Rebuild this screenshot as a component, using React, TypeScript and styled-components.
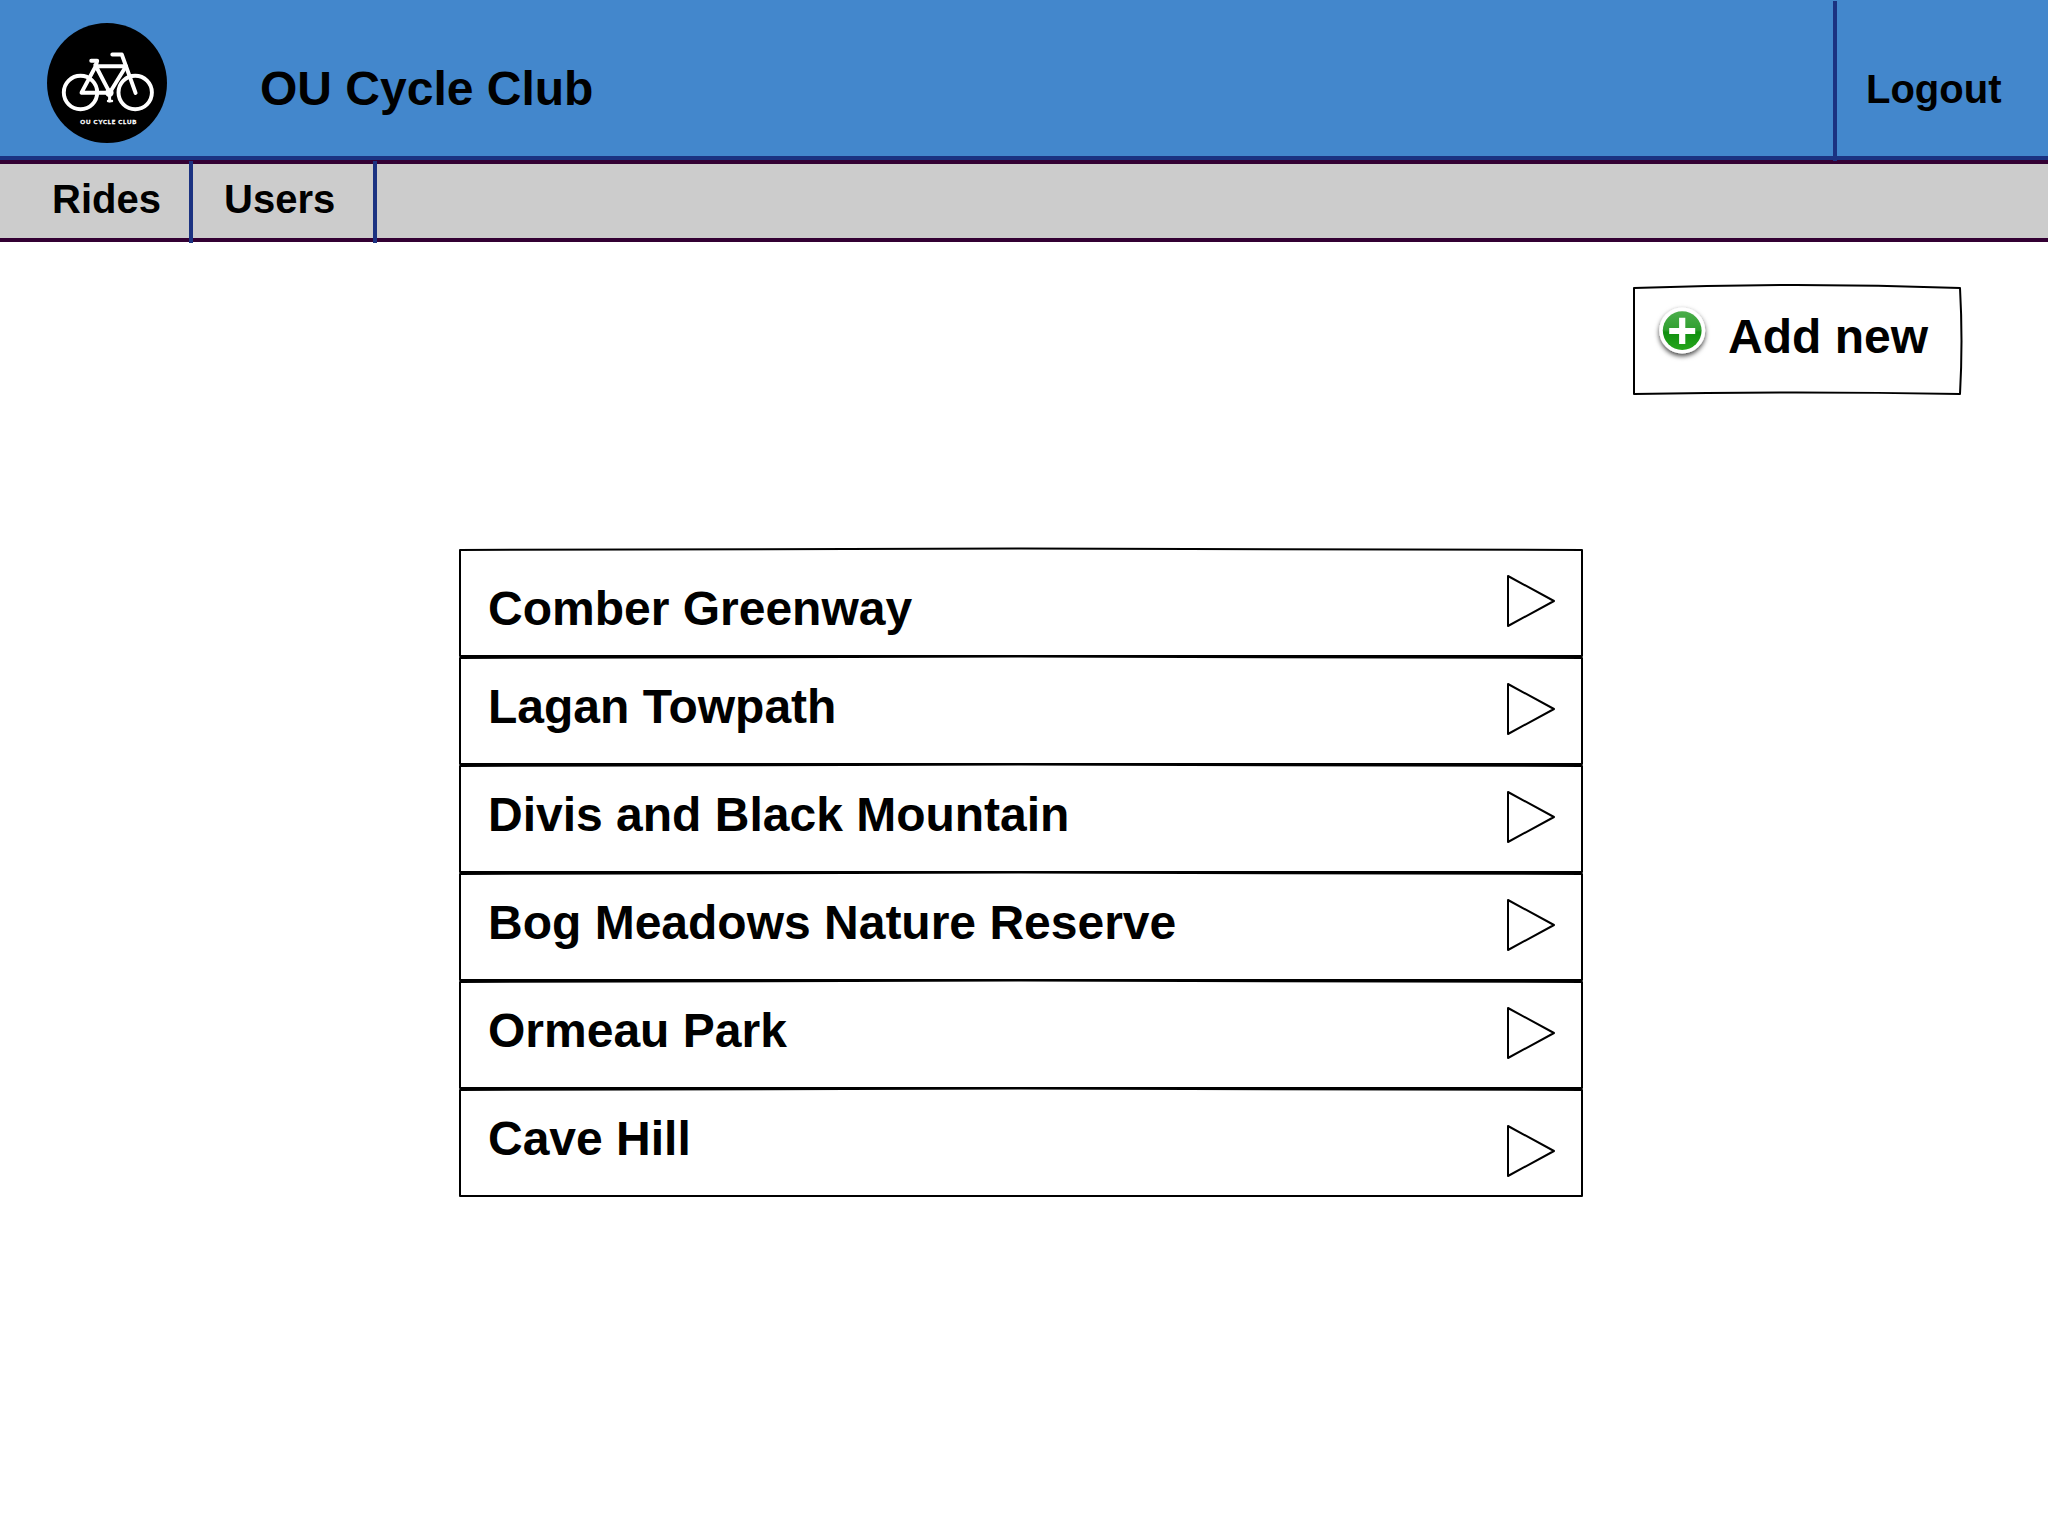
import React from "react";
import styled, { createGlobalStyle } from "styled-components";

const NAVY = "#1b3281";
const PLUM = "#330033";

const GlobalStyle = createGlobalStyle`
  * { box-sizing: border-box; }
  body {
    margin: 0;
    background: #fff;
    color: #000;
    font-family: "Liberation Sans", Arial, sans-serif;
    font-weight: 700;
  }
  button, a { font: inherit; color: inherit; text-decoration: none; }
`;

const Page = styled.div`
  display: flex;
  flex-direction: column;
  width: 2048px;
  height: 1536px;
  overflow: hidden;
`;

const Header = styled.header`
  display: flex;
  align-items: flex-start;
  height: 160px;
  background: #4387cc;
  border-bottom: 4px solid ${NAVY};
`;

const LogoWrap = styled.div`
  width: 120px;
  height: 120px;
  margin: 23px 0 0 47px;
  svg { display: block; }
`;

const Title = styled.h1`
  margin: 61px 0 0 93px;
  font-size: 48px;
  line-height: 56px;
  white-space: nowrap;
`;

const Logout = styled.a`
  position: relative;
  height: 160px;
  width: 215px;
  margin: 1px 0 0 auto;
  padding: 64px 0 0 29px;
  border-left: 4px solid ${NAVY};
  font-size: 40px;
  line-height: 48px;
`;

const Nav = styled.nav`
  display: flex;
  align-items: flex-start;
  height: 82px;
  background: #ccc;
  border-top: 4px solid ${PLUM};
  border-bottom: 4px solid ${PLUM};
`;

const Tab = styled.a<{ $width: number; $inset: number }>`
  width: ${(p) => p.$width}px;
  height: 82px;
  margin-top: -3px;
  padding: 14px 0 0 ${(p) => p.$inset}px;
  border-right: 4px solid ${NAVY};
  font-size: 40px;
  line-height: 48px;
`;

const Toolbar = styled.div`
  display: flex;
  justify-content: flex-end;
  padding: 41px 84px 0 0;
`;

const AddButton = styled.button`
  display: grid;
  width: 332px;
  height: 114px;
  padding: 0;
  border: 0;
  background: none;
  text-align: left;
  > * { grid-area: 1 / 1; }
`;

const AddContent = styled.span`
  display: flex;
  align-items: flex-start;
`;

const PlusWrap = styled.span`
  width: 60px;
  height: 60px;
  margin: 19px 0 0 20px;
  svg { display: block; }
`;

const AddLabel = styled.span`
  margin: 26px 0 0 16px;
  font-size: 48px;
  line-height: 56px;
  white-space: nowrap;
`;

const List = styled.ul`
  width: 1124px;
  margin: 152px 0 0 459px;
  padding: 0;
  list-style: none;
`;

const Row = styled.li`
  display: grid;
  height: 108px;
  > * { grid-area: 1 / 1; }
`;

const Outline = styled.svg`
  display: block;
  overflow: visible;
  fill: none;
  stroke: #000;
  stroke-width: 2;
  stroke-linejoin: round;
`;

const RowContent = styled.div`
  display: flex;
  justify-content: space-between;
  align-items: flex-start;
  padding: 0 27px 0 29px;
`;

const RowLabel = styled.span<{ $top: number }>`
  margin-top: ${(p) => p.$top}px;
  font-size: 48px;
  line-height: 56px;
  white-space: nowrap;
`;

const Arrow = styled.svg<{ $top: number }>`
  margin-top: ${(p) => p.$top}px;
  fill: none;
  stroke: #000;
  stroke-width: 2;
  stroke-linejoin: round;
`;

const RIDES = [
  { name: "Comber Greenway", text: 32, arrow: 25 },
  { name: "Lagan Towpath", text: 22, arrow: 25 },
  { name: "Divis and Black Mountain", text: 22, arrow: 25 },
  { name: "Bog Meadows Nature Reserve", text: 22, arrow: 25 },
  { name: "Ormeau Park", text: 22, arrow: 25 },
  { name: "Cave Hill", text: 22, arrow: 35 },
];

const Logo = () => (
  <svg width="120" height="120" viewBox="0 0 120 120">
    <circle cx="60" cy="60" r="60" />
    <g fill="none" stroke="#fff" strokeWidth="3.9" strokeLinecap="round" strokeLinejoin="round">
      <circle cx="33.5" cy="69.5" r="16.7" />
      <circle cx="88.2" cy="69.5" r="16.7" />
      <path d="M65.3 31.5H74.8L88.6 70" />
      <path d="M44.2 37.7H50.2L48.8 43L34.5 69.7H62" />
      <path d="M49 43.2H79L62.7 69.7L48.3 42" />
      <path d="M62.6 70V78" strokeWidth="3" />
      <path d="M61 78H65" strokeWidth="2.4" />
    </g>
    <circle cx="62.4" cy="69.7" r="4.2" fill="#fff" />
    <text x="61.3" y="101" fill="#fff" stroke="#fff" strokeWidth="0.3" fontSize="6" fontWeight="900" textAnchor="middle" textLength="56" fontFamily="Lato, sans-serif">
      OU CYCLE CLUB
    </text>
  </svg>
);

const Plus = () => (
  <svg width="60" height="60" viewBox="0 0 60 60">
    <defs>
      <linearGradient id="green" x1="0" y1="0" x2="0" y2="1">
        <stop offset="0" stopColor="#4cae4c" />
        <stop offset="0.48" stopColor="#2f9f2f" />
        <stop offset="0.54" stopColor="#109010" />
        <stop offset="1" stopColor="#26a51c" />
      </linearGradient>
      <filter id="shadow" x="-30%" y="-30%" width="160%" height="160%">
        <feDropShadow dx="0" dy="2.5" stdDeviation="2.4" floodColor="#000" floodOpacity="0.75" />
      </filter>
    </defs>
    <circle cx="30.2" cy="28.6" r="23" fill="#fff" filter="url(#shadow)" />
    <circle cx="30.2" cy="28.6" r="19.4" fill="url(#green)" />
    <path d="M30.2 15.8V42M17.2 29H43.2" stroke="#fff" strokeWidth="6.2" />
  </svg>
);

export default function App() {
  return (
    <Page>
      <GlobalStyle />
      <Header>
        <LogoWrap><Logo /></LogoWrap>
        <Title>OU Cycle Club</Title>
        <Logout>Logout</Logout>
      </Header>
      <Nav>
        <Tab $width={193} $inset={52}>Rides</Tab>
        <Tab $width={184} $inset={31}>Users</Tab>
      </Nav>
      <Toolbar>
        <AddButton>
          <Outline width="332" height="114">
            <path d="M2 5Q164 -1 328 5Q331 58 328 111Q164 108 2 111Z" />
          </Outline>
          <AddContent>
            <PlusWrap><Plus /></PlusWrap>
            <AddLabel>Add new</AddLabel>
          </AddContent>
        </AddButton>
      </Toolbar>
      <List>
        {RIDES.map((ride) => (
          <Row key={ride.name}>
            <Outline width="1124" height="108">
              <path d="M1 1L562 -0.5L1123 1V107H1Z" />
            </Outline>
            <RowContent>
              <RowLabel $top={ride.text}>{ride.name}</RowLabel>
              <Arrow $top={ride.arrow} width="50" height="54">
                <path d="M2 2V52L48 27Z" />
              </Arrow>
            </RowContent>
          </Row>
        ))}
      </List>
    </Page>
  );
}
